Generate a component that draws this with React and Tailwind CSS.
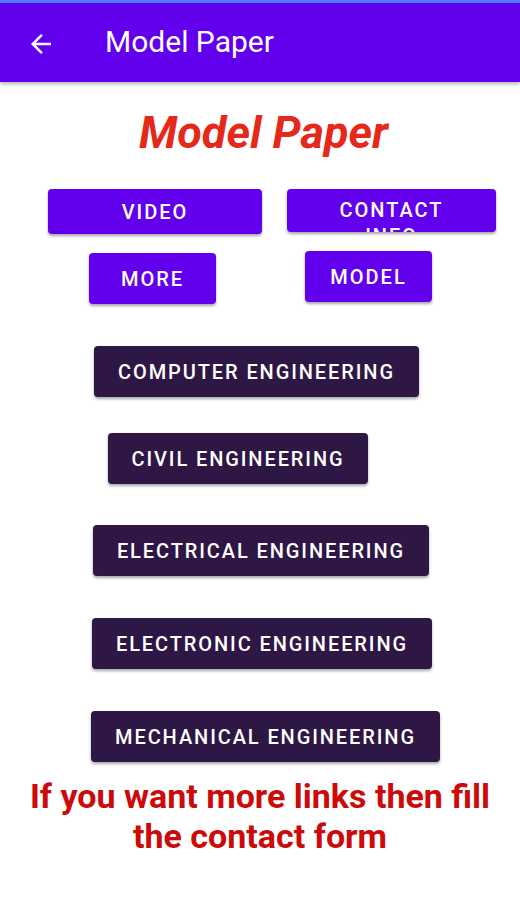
import React from "react";

const purple = "bg-[#6200ee] text-white shadow-[0_2px_3px_rgba(0,0,0,0.35)] rounded-[4px]";
const dark = "bg-[#2f1745] text-white shadow-[0_2px_3px_rgba(0,0,0,0.35)] rounded-[4px]";

function EngButton({ label, className }) {
  return (
    <button
      className={`${dark} h-[51px] flex items-center justify-center text-[20px] font-medium tracking-[1.9px] ${className}`}
    >
      {label}
    </button>
  );
}

export default function App() {
  return (
    <div className="w-[520px] h-[900px] bg-white font-['Roboto',sans-serif] overflow-hidden">
      {/* app bar */}
      <div className="h-[82px] bg-[#6200ee] border-t-[3px] border-[#4d7cff] flex items-center shadow-[0_2px_4px_rgba(0,0,0,0.3)]">
        <svg
          width="30"
          height="30"
          viewBox="0 0 24 24"
          className="ml-[26px] mt-[2px]"
          fill="white"
        >
          <path d="M20 11H7.83l5.59-5.59L12 4l-8 8 8 8 1.41-1.41L7.83 13H20v-2z" />
        </svg>
        <span className="ml-[49px] text-white text-[30px] leading-none mb-[2px]">
          Model Paper
        </span>
      </div>

      <div className="flex flex-col">
        <h1 className="mt-[26px] ml-[139px] text-[45px] leading-[50px] font-bold italic text-[#e6281b]">
          Model Paper
        </h1>

        <div className="flex mt-[31px]">
          <button
            className={`${purple} ml-[48px] w-[214px] h-[45px] flex items-center justify-center text-[20px] font-medium tracking-[2px]`}
          >
            VIDEO
          </button>
          <button
            className={`${purple} ml-[25px] w-[209px] h-[43px] overflow-hidden flex flex-col items-center justify-start pt-[8px] text-[20px] leading-[26px] font-medium tracking-[2px]`}
          >
            <span>CONTACT</span>
            <span>INFO</span>
          </button>
        </div>

        <div className="flex mt-[17px]">
          <button
            className={`${purple} ml-[89px] mt-[2px] w-[127px] h-[51px] flex items-center justify-center text-[20px] font-medium tracking-[2px]`}
          >
            MORE
          </button>
          <button
            className={`${purple} ml-[89px] w-[127px] h-[51px] flex items-center justify-center text-[20px] font-medium tracking-[2px]`}
          >
            MODEL
          </button>
        </div>

        <EngButton label="COMPUTER ENGINEERING" className="ml-[94px] mt-[42px] w-[325px]" />
        <EngButton label="CIVIL ENGINEERING" className="ml-[108px] mt-[36px] w-[260px]" />
        <EngButton label="ELECTRICAL ENGINEERING" className="ml-[93px] mt-[41px] w-[336px]" />
        <EngButton label="ELECTRONIC ENGINEERING" className="ml-[92px] mt-[42px] w-[340px]" />
        <EngButton label="MECHANICAL ENGINEERING" className="ml-[91px] mt-[42px] w-[349px]" />

        <p className="mt-[14px] text-center text-[34px] leading-[40px] font-bold text-[#cc0a0a] px-[14px]">
          If you want more links then fill
          <br />
          the contact form
        </p>
      </div>
    </div>
  );
}
